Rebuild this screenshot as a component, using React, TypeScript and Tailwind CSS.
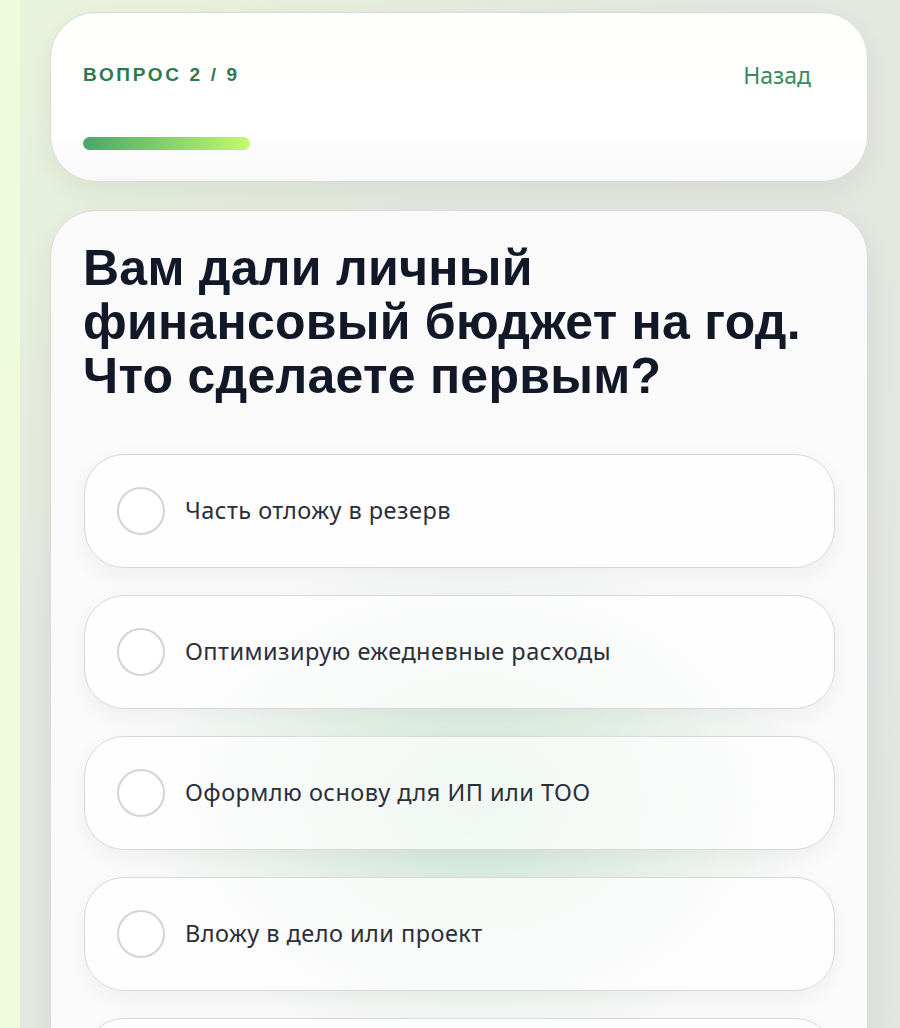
import React from "react";

const options = [
  "Часть отложу в резерв",
  "Оптимизирую ежедневные расходы",
  "Оформлю основу для ИП или ТОО",
  "Вложу в дело или проект",
];

export default function App() {
  return (
    <div className="h-[1028px] overflow-hidden bg-[#effbda] pl-5">
      <div className="h-full bg-[linear-gradient(135deg,#e9f3dc_0%,#e3e8df_35%,#e2e4e2_100%)] pl-[30px] pr-[32px] pt-3">
        {/* Header card */}
        <div className="h-[170px] rounded-[46px] border border-[#d9dbd9] bg-[linear-gradient(180deg,#fefffd_0%,#ffffff_70%,#f8f8f8_100%)] pl-8 pr-[56px] pt-[48px] shadow-[0_10px_30px_rgba(0,0,0,0.06)]">
          <div className="flex h-[28px] items-center justify-between">
            <div
              className="text-[19px] font-bold uppercase tracking-[0.14em] text-[#2f7a4d]"
              style={{ fontFamily: '"Liberation Sans", Arial, sans-serif' }}
            >
              Вопрос <span className="font-black">2 / 9</span>
            </div>
            <div
              className="text-[23px] font-normal text-[#3a8a5c]"
              style={{ fontFamily: '"Noto Sans", "Open Sans", sans-serif' }}
            >
              Назад
            </div>
          </div>
          <div className="mt-[48px] h-[13px] w-[167px] rounded-full bg-[linear-gradient(90deg,#4ba66a_0%,#86d06d_50%,#c3fb6b_100%)]" />
        </div>

        {/* Question card */}
        <div className="mt-[28px] h-[900px] rounded-t-[46px] border border-[#dadcda] bg-[radial-gradient(ellipse_340px_260px_at_52%_66%,rgba(196,226,204,0.8),rgba(250,250,250,0)_100%),linear-gradient(180deg,#fafafa,#fbfbfb)] px-8 pt-[30px] shadow-[0_10px_30px_rgba(0,0,0,0.06)]">
          <h1
            className="text-[50px] font-bold leading-[54px] tracking-[0.005em] text-[#111827]"
            style={{ fontFamily: '"Liberation Sans", Arial, sans-serif' }}
          >
            Вам дали личный
            <br />
            финансовый бюджет на год.
            <br />
            Что сделаете первым?
          </h1>

          <div className="mt-[51px] flex flex-col gap-[27px] pl-px">
            {options.map((o) => (
              <div
                key={o}
                className="flex h-[114px] items-center gap-5 rounded-[40px] border border-[#d8d8d8] bg-[rgba(255,255,255,0.7)] pl-8 shadow-[0_8px_24px_rgba(0,0,0,0.05)]"
              >
                <div className="h-[48px] w-[48px] shrink-0 rounded-full border-2 border-[#d4d4d8] bg-white/80" />
                <span
                  className="text-[23.5px] tracking-[0.02em] text-[#2a2f3a]"
                  style={{ fontFamily: '"Noto Sans", "Open Sans", sans-serif' }}
                >
                  {o}
                </span>
              </div>
            ))}
            <div className="h-[114px] rounded-[40px] border border-[#d8d8d8] bg-[rgba(255,255,255,0.7)] shadow-[0_8px_24px_rgba(0,0,0,0.05)]" />
          </div>
        </div>
      </div>
    </div>
  );
}
